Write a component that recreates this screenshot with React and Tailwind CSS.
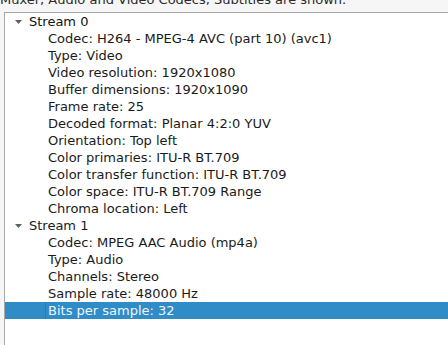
import React from "react";

const Arrow = () => (
  <svg width="7" height="4" viewBox="0 0 7 4" className="shrink-0">
    <path d="M0 0 L7 0 L3.5 4 Z" fill="#606060" />
  </svg>
);

const stream0 = [
  "Codec: H264 - MPEG-4 AVC (part 10) (avc1)",
  "Type: Video",
  "Video resolution: 1920x1080",
  "Buffer dimensions: 1920x1090",
  "Frame rate: 25",
  "Decoded format: Planar 4:2:0 YUV",
  "Orientation: Top left",
  "Color primaries: ITU-R BT.709",
  "Color transfer function: ITU-R BT.709",
  "Color space: ITU-R BT.709 Range",
  "Chroma location: Left",
];
const stream1 = [
  "Codec: MPEG AAC Audio (mp4a)",
  "Type: Audio",
  "Channels: Stereo",
  "Sample rate: 48000 Hz",
];

export default function App() {
  return (
    <div
      className="w-[448px] h-[345px] overflow-hidden bg-[#f6f6f6] text-[13px] leading-[17px] text-[#1a1a1a]"
      style={{ fontFamily: '"DejaVu Sans", sans-serif' }}
    >
      <div className="h-[12px] relative">
        <div className="absolute left-0 top-[-9px] whitespace-nowrap text-[#2a2a2a]">
          Muxer, Audio and Video Codecs, Subtitles are shown.
        </div>
      </div>
      <div className="ml-[4px] h-[333px] border-l border-t border-[#a8a8a8] bg-white">
        <div className="h-[17px] flex items-center">
          <div className="w-[24px] flex justify-center pl-[2px]"><Arrow /></div>
          <span className="text-[#111]">Stream 0</span>
        </div>
        {stream0.map((t) => (
          <div key={t} className="h-[17px] flex items-center pl-[43px] whitespace-nowrap">
            {t}
          </div>
        ))}
        <div className="h-[17px] flex items-center">
          <div className="w-[24px] flex justify-center pl-[2px]"><Arrow /></div>
          <span>Stream 1</span>
        </div>
        {stream1.map((t) => (
          <div key={t} className="h-[17px] flex items-center pl-[43px] whitespace-nowrap">
            {t}
          </div>
        ))}
        <div className="h-[17px] flex bg-[#308cc6]">
          <div className="w-[40px]" />
          <div className="flex-1 flex items-center pl-[2px] border-l border-[#2a7cb0] text-[#eef5fb] whitespace-nowrap">
            Bits per sample: 32
          </div>
        </div>
      </div>
    </div>
  );
}
